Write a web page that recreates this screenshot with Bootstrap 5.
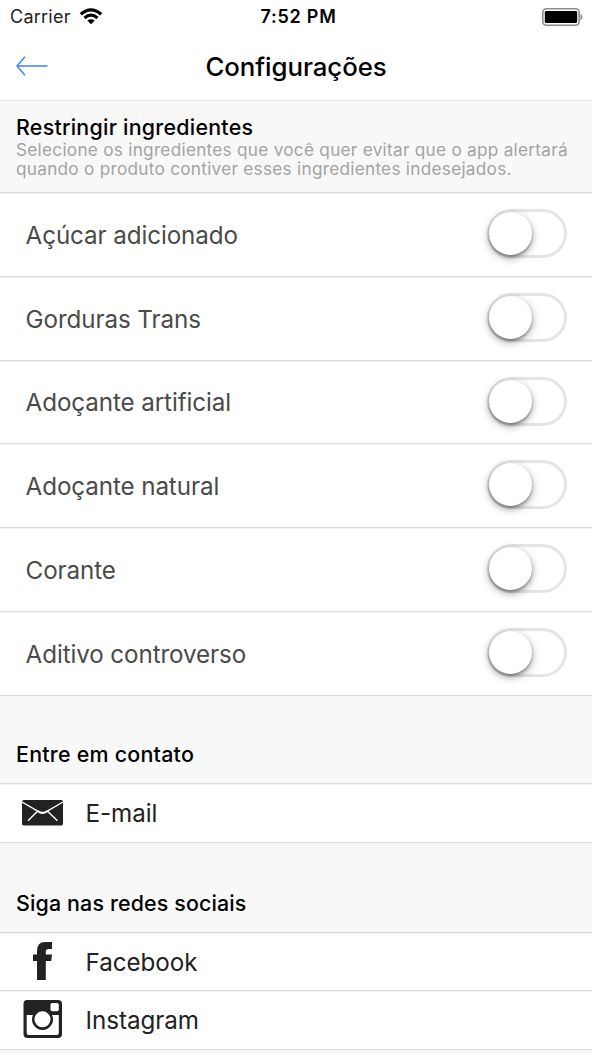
<!DOCTYPE html>
<html lang="pt-BR">
<head>
<meta charset="utf-8">
<meta name="viewport" content="width=device-width, initial-scale=1">
<title>Configurações</title>
<link href="https://cdn.jsdelivr.net/npm/bootstrap@5.3.0/dist/css/bootstrap.min.css" rel="stylesheet">
<style>
body{font-family:Inter,"Liberation Sans",sans-serif;color:#000;background:#f8f8f8;overflow:hidden}
svg{display:block}
.status{height:33px;font-size:18px;line-height:33px;padding:0 8px 0 10px}
.carrier{letter-spacing:.25px;color:#222}
.clock{letter-spacing:.75px;padding-left:3px}
.topbar{height:67px;padding-bottom:1px}
.title{font-size:25.8px;line-height:34px;font-weight:500;letter-spacing:-.05px;padding-top:2px}
.intro{height:92.3px;border-top:1px solid #e2e2e2;padding-top:13px}
.section-name{font-size:21.4px;line-height:26px;font-weight:500;letter-spacing:.25px}
.section-name.tight{letter-spacing:.15px}
.hint{font-size:17.2px;line-height:19px;color:#a3a3a3;letter-spacing:.27px}
.settings{--bs-list-group-bg:#fff;border-radius:0}
.settings .list-group-item{border-width:1px 0 0;border-color:#d9d9d9;box-shadow:inset 0 1px #f3f3f3}
.settings .list-group-item:last-child{border-bottom-width:1px}
.option{height:83.72px;font-size:24.2px;color:#4a4a4a;letter-spacing:-.1px;padding:0 25px 0 25.6px}
.option:last-child{height:84.9px}
.label-text{padding-top:3px}
.contact{height:58.4px;font-size:24.2px;color:#222;letter-spacing:-.05px;padding:0 21px}
.contact:last-child{height:59.6px}
.contact-icon{width:43px;margin-right:21.5px}
.lifted{padding-bottom:2px}
.group-head{height:87.2px;padding-bottom:15.5px}
.group-head.tall{height:89.4px}
.toggle{width:80px;height:49px;border:3px solid #e5e5e5;border-radius:25px;margin-bottom:2px}
.knob{width:43px;height:43px;margin-left:-1px;border-radius:50%;background:#fff;box-shadow:0 3px 8px rgba(0,0,0,.36),0 2px 3px rgba(0,0,0,.3)}
</style>
</head>
<body>
<header class="bg-white">
  <div class="status row g-0 align-items-center">
    <div class="col d-flex align-items-center gap-2">
      <span class="carrier">Carrier</span>
      <svg width="24" height="17" viewBox="0 0 24 17" fill="none" stroke="#000" stroke-width="3.2"><path d="M1.8 6.3Q12 -2.6 22.2 6.3"/><path d="M5.5 10Q12 4.4 18.5 10"/><path d="M12 16.2L8.3 12.6Q12 9.8 15.7 12.6Z" fill="#000" stroke="none"/></svg>
    </div>
    <div class="col-auto clock fw-semibold">7:52 PM</div>
    <div class="col d-flex justify-content-end">
      <svg width="42" height="18" viewBox="0 0 42 18"><rect x=".8" y=".8" width="36.4" height="16.4" rx="3.6" fill="none" stroke="#8c8c8c" stroke-width="1.6"/><rect x="2.800" y="3" width="32.400" height="12" rx="1.200"/><path d="M38.500 5.500Q42.500 9 38.500 12.500Z" fill="#8c8c8c"/></svg>
    </div>
  </div>
  <nav class="topbar row g-0 align-items-center px-3">
    <div class="col"><svg width="32" height="20" viewBox="0 0 32 20" fill="none" stroke="#3b82f6" stroke-width="1.4"><path d="M9 .8L.9 10L9 19.2M.9 10H31.5"/></svg></div>
    <h1 class="col-auto title mb-0">Configurações</h1>
    <div class="col"></div>
  </nav>
</header>

<section class="intro px-3">
  <h2 class="section-name mb-0">Restringir ingredientes</h2>
  <p class="hint mb-0 text-nowrap">Selecione os ingredientes que você quer evitar que o app alertará<br>quando o produto contiver esses ingredientes indesejados.</p>
</section>
<ul class="list-group settings">
  <li class="list-group-item option d-flex align-items-center justify-content-between"><span class="label-text">Açúcar adicionado</span><span class="toggle" role="switch"><span class="knob d-block"></span></span></li>
  <li class="list-group-item option d-flex align-items-center justify-content-between"><span class="label-text">Gorduras Trans</span><span class="toggle" role="switch"><span class="knob d-block"></span></span></li>
  <li class="list-group-item option d-flex align-items-center justify-content-between"><span class="label-text">Adoçante artificial</span><span class="toggle" role="switch"><span class="knob d-block"></span></span></li>
  <li class="list-group-item option d-flex align-items-center justify-content-between"><span class="label-text">Adoçante natural</span><span class="toggle" role="switch"><span class="knob d-block"></span></span></li>
  <li class="list-group-item option d-flex align-items-center justify-content-between"><span class="label-text">Corante</span><span class="toggle" role="switch"><span class="knob d-block"></span></span></li>
  <li class="list-group-item option d-flex align-items-center justify-content-between"><span class="label-text">Aditivo controverso</span><span class="toggle" role="switch"><span class="knob d-block"></span></span></li>
</ul>

<section>
  <div class="group-head d-flex align-items-end px-3"><h2 class="section-name mb-0">Entre em contato</h2></div>
  <ul class="list-group settings">
    <li class="list-group-item contact d-flex align-items-center"><span class="contact-icon">
      <svg width="43" height="28" viewBox="0 0 43 28"><rect x="1" y="1" width="41" height="25.5" rx="1.8" fill="#222"/><path d="M1 3L17.5 12.6Q21.5 15.6 25.5 12.6L42 3M16.5 12.2L7 21.8M26.5 12.2L36.5 21.8" fill="none" stroke="#fff" stroke-width="1.4"/><path d="M16.5 12Q21.5 15.5 26.5 12" fill="none" stroke="#fff" stroke-width="2"/></svg></span><span class="label-text">E-mail</span></li>
  </ul>
</section>

<section>
  <div class="group-head tall d-flex align-items-end px-3"><h2 class="section-name tight mb-0">Siga nas redes sociais</h2></div>
  <ul class="list-group settings">
    <li class="list-group-item contact d-flex align-items-center"><span class="contact-icon lifted">
      <svg width="43" height="40" viewBox="0 0 43 40"><path d="M16 39V20H12V13.5H16V10Q16 1 24 1H31V8H27Q24.8 8 24.8 10.5V13.5H31L30.2 20H24.8V39Z" fill="#222"/></svg></span><span class="label-text">Facebook</span></li>
    <li class="list-group-item contact d-flex align-items-center"><span class="contact-icon lifted">
      <svg width="43" height="40" viewBox="0 0 43 40"><path d="M6 1H37Q41 1 41 5V35Q41 39 37 39H6.500Q2.500 39 2.500 35V5Q2.500 1 6 1Z" fill="#222"/><path d="M5.700 16H12A10.500 10.500 0 1 0 31 16H37.800V34Q37.800 36 35.800 36H7.700Q5.700 36 5.700 34Z" fill="#fff"/><circle cx="21.500" cy="20.300" r="8" fill="#fff"/><rect x="29.500" y="4" width="8.300" height="8.300" rx="1.800" fill="#fff"/></svg></span><span class="label-text">Instagram</span></li>
  </ul>
</section>
</body>
</html>
